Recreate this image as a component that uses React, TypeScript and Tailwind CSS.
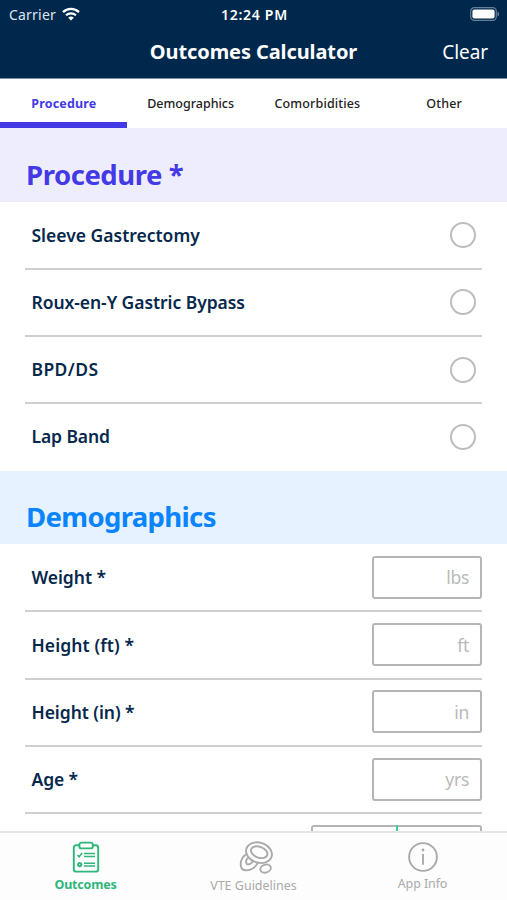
import React from "react";
import clsx from "clsx";

const tabs = [
  { label: "Procedure", className: "tracking-[0.15px]" },
  { label: "Demographics", className: "tracking-[0px]" },
  { label: "Comorbidities", className: "tracking-[0.15px]" },
  { label: "Other", className: "tracking-[0.2px]" },
];

const procedures = [
  { label: "Sleeve Gastrectomy", className: "tracking-[0px]" },
  { label: "Roux-en-Y Gastric Bypass", className: "tracking-[-0.06px]" },
  { label: "BPD/DS", className: "tracking-[0.4px]" },
  { label: "Lap Band", className: "tracking-[-0.1px]" },
];

const measurements = [
  { label: "Weight *", unit: "lbs", className: "tracking-[-0.05px]" },
  { label: "Height (ft) *", unit: "ft", className: "tracking-[0.1px]" },
  { label: "Height (in) *", unit: "in", className: "tracking-[-0.05px]" },
  { label: "Age *", unit: "yrs", className: "tracking-[-0.1px]" },
];

function StatusBar() {
  return (
    <div className="grid h-7 grid-cols-3 items-center pr-[7px] pl-[9px] text-[14px]">
      <div className="flex items-center gap-[6px]">
        <span className="tracking-[0.2px] text-[#dfe6ee]">Carrier</span>
        <svg width="18" height="14" viewBox="0 0 18 14" fill="none">
          <path d="M1 5.2A11.4 11.4 0 0 1 17 5.2" stroke="white" strokeWidth="2.4" />
          <path d="M4 8.3A7.2 7.2 0 0 1 14 8.3" stroke="white" strokeWidth="2.2" />
          <path d="M9 13.6 6.2 10.8A4 4 0 0 1 11.8 10.8Z" fill="white" />
        </svg>
      </div>
      <span className="text-center font-semibold tracking-[0.7px] whitespace-nowrap">12:24 PM</span>
      <svg className="-mt-px justify-self-end" width="30" height="14" viewBox="0 0 30 14">
        <rect x="0.7" y="0.7" width="25.6" height="12.6" rx="3.6" fill="none" stroke="#667f96" strokeWidth="1.2" />
        <rect x="2.4" y="2.4" width="22.2" height="9.2" rx="2" fill="white" />
        <path d="M27.6 4.7v4.6c1.8-.7 1.8-3.9 0-4.6Z" fill="#8094a7" />
      </svg>
    </div>
  );
}

function SectionHeader({ title, className }: { title: string; className: string }) {
  return (
    <h2 className={clsx("flex h-[73.5px] items-center pt-5 pl-[26px] leading-9 font-bold", className)}>
      {title}
    </h2>
  );
}

function Row({
  label,
  className,
  last,
  children,
}: {
  label: string;
  className: string;
  last?: boolean;
  children: React.ReactNode;
}) {
  return (
    <div className="mx-[25px] h-[67.3px]">
      <div className="flex h-full items-center justify-between pb-px pl-[6.5px]">
        <span className={clsx("text-[17.5px] font-semibold text-[#06284c]", className)}>{label}</span>
        {children}
      </div>
      {!last && <hr className="-mt-px border-t-2 border-[#cfcfcf]" />}
    </div>
  );
}

function ClipboardIcon() {
  return (
    <svg width="28" height="32" viewBox="0 0 28 32" fill="none" stroke="currentColor" strokeWidth="1.9">
      <path d="M7 4.2H4.2a2.4 2.4 0 0 0-2.4 2.4v21.6a2.4 2.4 0 0 0 2.4 2.4h19.6a2.4 2.4 0 0 0 2.4-2.4V6.6a2.4 2.4 0 0 0-2.4-2.4H21" />
      <rect x="7.4" y="1.6" width="13.4" height="5.8" rx="2" />
      <path d="m5.5 14 1.6 1.7 3-3.6" strokeWidth="1.6" />
      <path d="M12 12.6h11M12 15.4h11M12 22.2h11M12 25h11" strokeWidth="1.5" />
      <circle cx="7.7" cy="23.6" r="1.6" strokeWidth="2" />
    </svg>
  );
}

function CellsIcon() {
  return (
    <svg width="34" height="34" viewBox="0 0 34 34" fill="none" stroke="currentColor" strokeWidth="1.9">
      <path d="M7.2 13.2C3.6 15.8 1.5 19.8 1.7 23.6c.2 3.6 2.4 5.8 5.6 5.8 4.8 0 9.4-3.2 11.4-7.6" />
      <path d="M9 16.6c-1.8 2-2.4 4.4-1.4 6 1 1.4 3.6.8 5.2-1 .7-.8 1.1-1.5 1.3-2.3" />
      <ellipse cx="20" cy="11.7" rx="13.2" ry="10" transform="rotate(18 20 11.7)" />
      <ellipse cx="20.2" cy="11.2" rx="8.6" ry="5.4" transform="rotate(20 20.2 11.2)" />
      <ellipse cx="26.6" cy="27.6" rx="5.4" ry="3.9" transform="rotate(-18 26.6 27.6)" />
    </svg>
  );
}

function InfoIcon() {
  return (
    <svg width="32" height="32" viewBox="0 0 32 32" fill="none" stroke="currentColor">
      <circle cx="16" cy="16" r="13.9" strokeWidth="1.9" />
      <path d="M16 13v10.8" strokeWidth="1.9" />
      <circle cx="16" cy="9" r="1.4" fill="currentColor" stroke="none" />
    </svg>
  );
}

export default function App() {
  return (
    <div className="flex h-[900px] w-[507px] flex-col overflow-hidden bg-white font-['Noto_Sans',sans-serif]">
      <header className="h-[79px] shrink-0 border-b border-[#7890a8] bg-[#00284d] text-white">
        <StatusBar />
        <div className="grid h-12 grid-cols-[1fr_auto_1fr] items-center">
          <h1 className="col-start-2 text-[20px] font-bold tracking-[-0.1px]">Outcomes Calculator</h1>
          <button className="justify-self-end pr-[19px] text-[19px] tracking-[-0.1px]">Clear</button>
        </div>
      </header>

      <nav className="grid h-[49px] shrink-0 grid-cols-4">
        {tabs.map((tab, i) => (
          <button
            key={tab.label}
            className={clsx(
              "border-b-[6px] pt-[8px] pl-px text-[12.5px]",
              i === 0 ? "border-[#4339e5] font-bold text-[#4339e5]" : "border-white font-medium text-[#222]",
            )}
          >
            <span className={tab.className}>{tab.label}</span>
          </button>
        ))}
      </nav>

      <main className="min-h-0 flex-1 overflow-hidden">
        <SectionHeader title="Procedure *" className="bg-[#eeedfe] text-[27.5px] tracking-[-0.45px] text-[#4339e5]" />
        {procedures.map((item, i) => (
          <Row key={item.label} {...item} last={i === procedures.length - 1}>
            <span className="mt-px mr-[6px] size-[26px] rounded-full border-2 border-[#bdbdbd]" />
          </Row>
        ))}

        <SectionHeader title="Demographics" className="bg-[#e6f2ff] text-[27.5px] tracking-[-0.65px] text-[#0a84ff]" />
        {measurements.map(({ unit, ...item }) => (
          <Row key={item.label} {...item}>
            <span className="flex h-[43px] w-[110px] items-center justify-end rounded-[3px] border-2 border-[#b5b5b5] pr-[11px] text-[17.5px] tracking-[-0.3px] text-[#b9b9b9]">
              {unit}
            </span>
          </Row>
        ))}
        <div className="mr-[25px] flex justify-end pt-[12px]">
          <div className="grid h-[43px] w-[171px] grid-cols-2 rounded-[3px] border-2 border-[#b5b5b5]">
            <span className="-mt-[2px] -mr-px border-r-2 border-[#43cf9b]" />
          </div>
        </div>
      </main>

      <footer className="grid h-[69px] shrink-0 grid-cols-3 border-t-2 border-[#e5e5e5] bg-[#fdfdfd] text-[12.5px] text-[#aaa]">
        <div className="flex flex-col items-center pt-[8px] pl-[2px] text-[#2fb67c]">
          <ClipboardIcon />
          <span className="mt-[3px] font-bold tracking-[-0.2px]">Outcomes</span>
        </div>
        <div className="flex flex-col items-center pt-[8px]">
          <div className="pl-[4px]">
            <CellsIcon />
          </div>
          <span className="mt-[2px]">VTE Guidelines</span>
        </div>
        <div className="flex flex-col items-center pt-[8px]">
          <InfoIcon />
          <span className="mt-[2px] tracking-[-0.1px]">App Info</span>
        </div>
      </footer>
    </div>
  );
}
